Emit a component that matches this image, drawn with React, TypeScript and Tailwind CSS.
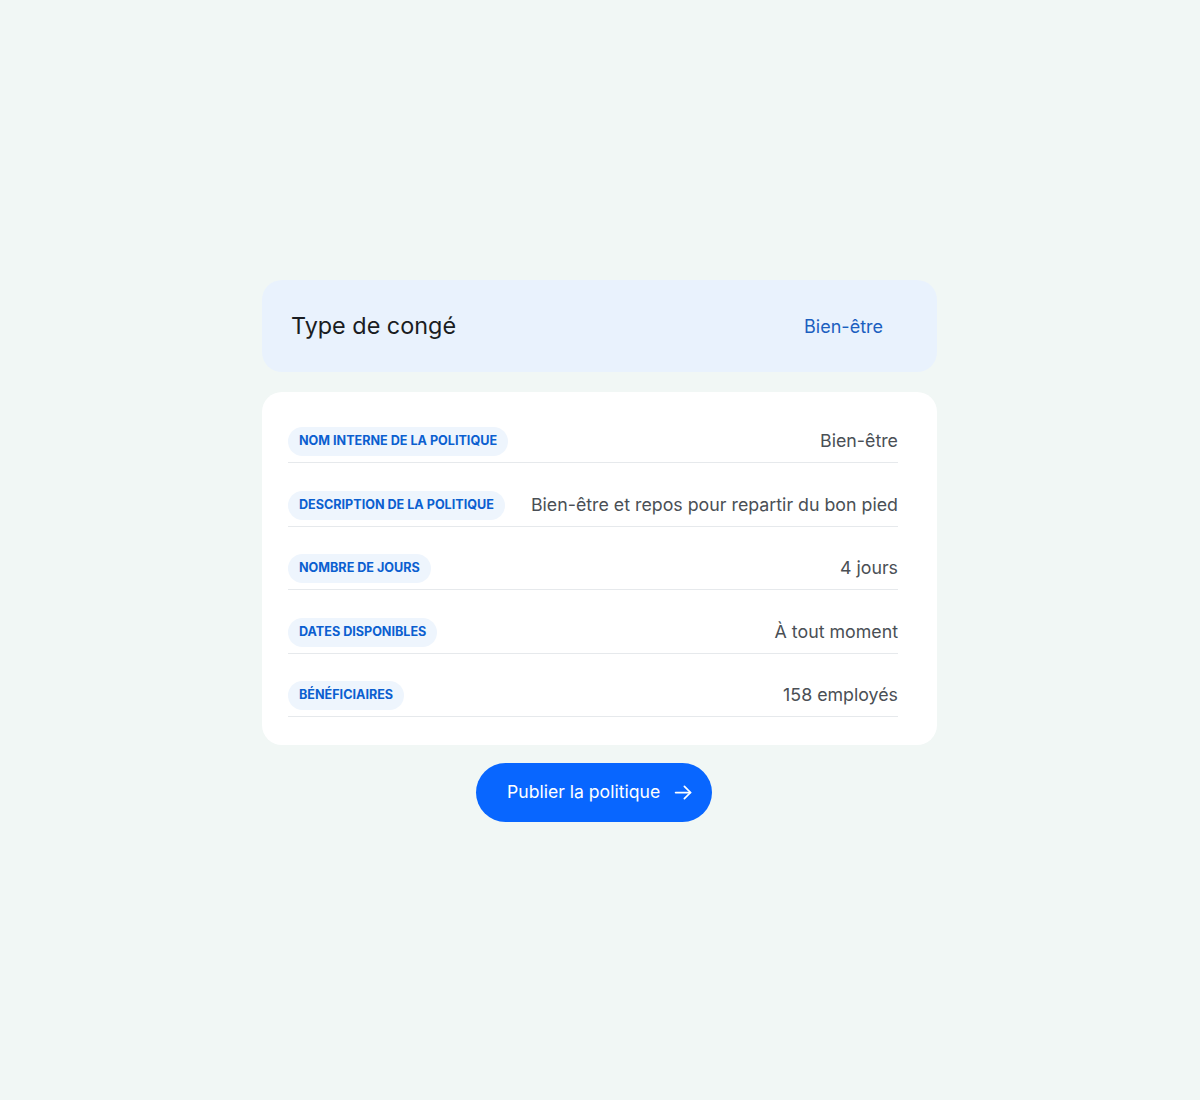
import React from "react";

const rows = [
  { label: "Nom interne de la politique", value: "Bien-être" },
  { label: "Description de la politique", value: "Bien-être et repos pour repartir du bon pied" },
  { label: "Nombre de jours", value: "4 jours" },
  { label: "Dates disponibles", value: "À tout moment" },
  { label: "Bénéficiaires", value: "158 employés" },
];

export default function App() {
  return (
    <div
      className="min-h-[1100px] w-full bg-[#f1f7f5] pt-[280px]"
      style={{ fontFamily: "Inter, 'Noto Sans', sans-serif" }}
    >
      <div className="ml-[262px] flex w-[675px] flex-col">
        <div className="flex h-[92px] items-center justify-between rounded-[20px] bg-[#e9f2fd] pl-[29px] pr-[54px]">
          <span className="text-[23.4px] text-[#1a1d22]">Type de congé</span>
          <span className="text-[18px] text-[#1b5fc0]">Bien-être</span>
        </div>

        <div className="mt-[20px] flex flex-col gap-[27.5px] rounded-[20px] bg-white pb-[28px] pl-[26px] pr-[39px] pt-[35px]">
          {rows.map((r) => (
            <div
              key={r.label}
              className="flex items-center justify-between border-b border-[#e6e9ec] pb-[6px]"
            >
              <span className="flex h-[29px] items-center rounded-full bg-[#eef5fd] px-[11px] text-[12.6px] font-bold uppercase text-[#0b5fd0]">
                {r.label}
              </span>
              <span className="text-[17.8px] text-[#4a4f55]">{r.value}</span>
            </div>
          ))}
        </div>

        <div className="mt-[18px] flex justify-center pr-[11px]">
          <button className="flex h-[59px] w-[236px] items-center gap-[13px] rounded-full bg-[#0866ff] pl-[31px] text-[17.6px] text-white">
            <span>Publier la politique</span>
            <svg width="21" height="21" viewBox="0 0 24 24" fill="none" stroke="currentColor" strokeWidth="2" strokeLinecap="round" strokeLinejoin="round">
              <path d="M3 12h17" />
              <path d="M13 5l7 7-7 7" />
            </svg>
          </button>
        </div>
      </div>
    </div>
  );
}
